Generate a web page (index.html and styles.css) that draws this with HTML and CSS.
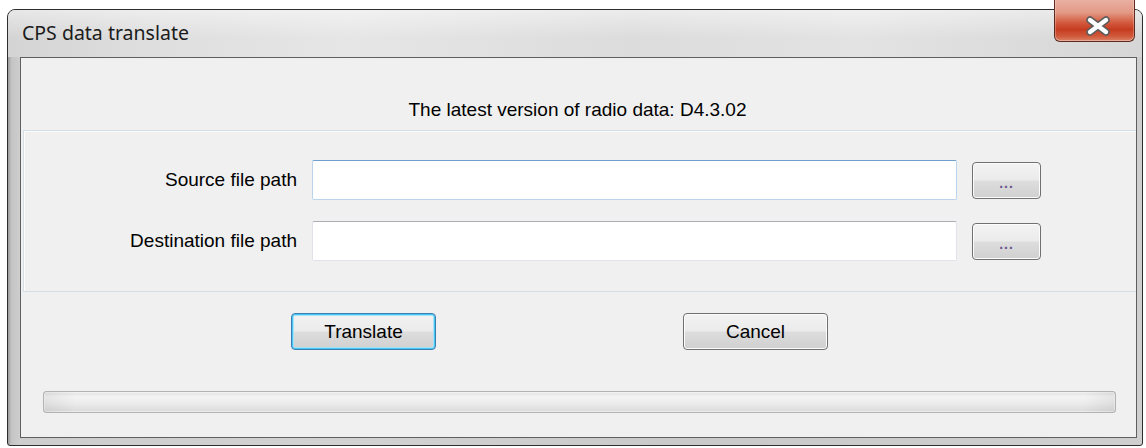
FILE: index.html
```html
<!DOCTYPE html>
<html lang="en">
<head>
<meta charset="utf-8">
<title>CPS data translate</title>
<link rel="stylesheet" href="styles.css">
</head>
<body>
<div class="window">
  <div class="titlebar">
    <span class="title">CPS data translate</span>
    <button class="close-btn" type="button" aria-label="Close">
      <svg width="26" height="20" viewBox="0 0 26 20">
        <path d="M5 4 L21 16 M21 4 L5 16" stroke="#5c5c5c" stroke-width="7.5" stroke-linecap="round" fill="none"/>
        <path d="M5 4 L21 16 M21 4 L5 16" stroke="#ffffff" stroke-width="4.4" stroke-linecap="round" fill="none"/>
      </svg>
    </button>
  </div>
  <div class="client">
    <div class="header">The latest version of radio data: D4.3.02</div>
    <div class="panel">
      <label class="field-label" for="src">Source file path</label>
      <input class="path-input hover" id="src" type="text">
      <button class="browse-btn" type="button">...</button>
      <label class="field-label" for="dst">Destination file path</label>
      <input class="path-input" id="dst" type="text">
      <button class="browse-btn" type="button">...</button>
    </div>
    <div class="actions">
      <button class="btn default" type="button">Translate</button>
      <button class="btn" type="button">Cancel</button>
    </div>
    <div class="progress"><div class="progress-shine"></div></div>
  </div>
</div>
</body>
</html>
```

FILE: styles.css
```css
* {
  box-sizing: border-box;
}

html, body {
  margin: 0;
  padding: 0;
  background: #ffffff;
}

body {
  width: 1146px;
  height: 448px;
  overflow: hidden;
  font-family: "Liberation Sans", Arial, sans-serif;
  font-size: 19px;
  color: #000;
}

/* Outer window frame */
.window {
  position: relative;
  margin: 9px 0 0 7px;
  width: 1136px;
  height: 437px;
  border: 1px solid #2e2e2e;
  border-radius: 8px 8px 3px 3px;
  padding: 0 5px 7px 12px;
  background: linear-gradient(to right, #9c9c9c 0%, #c4c4c4 0.3%, #cdcdcd 1%, #d2d2d2 30%, #c9c9c9 60%, #cfcfcf 100%);
  display: flex;
  flex-direction: column;
}

.titlebar {
  position: relative;
  height: 47px;
  margin: 0 -5px 0 -12px;
  padding: 11px 0 0 14px;
  border-radius: 7px 7px 0 0;
  background:
    linear-gradient(to bottom, rgba(255,255,255,0.45) 0%, rgba(255,255,255,0) 60%),
    linear-gradient(to right, #d4d4d4 0%, #dedede 12%, #e6e6e6 30%, #dcdcdc 55%, #e3e3e3 75%, #d6d6d6 100%);
}

.title {
  font-family: "Noto Sans", "Open Sans", sans-serif;
  font-size: 19.5px;
  line-height: 24px;
  color: #1b1b1b;
}

.close-btn {
  position: absolute;
  top: -10px;
  right: 7px;
  width: 81px;
  height: 42px;
  padding: 10px 0 0 6px;
  border: 1px solid #5e2a1e;
  border-top: none;
  border-radius: 0 0 6px 6px;
  background: linear-gradient(to bottom, #e9b0a2 0%, #e39a86 30%, #d35a3e 55%, #c63c20 72%, #d0583a 88%, #dc8266 100%);
  box-shadow: inset 0 -1px 0 rgba(255,255,255,0.35), inset 1px 0 0 rgba(255,255,255,0.25), inset -1px 0 0 rgba(255,255,255,0.25);
  display: flex;
  align-items: center;
  justify-content: center;
}

.close-btn svg {
  display: block;
}

/* Client area */
.client {
  flex: 1;
  border: 1px solid #5f5f5f;
  background: #f0f0f0;
  display: flex;
  flex-direction: column;
}

.header {
  height: 72px;
  padding-top: 41px;
  line-height: 22px;
  text-align: center;
  padding-right: 2px;
}

.panel {
  margin-left: 2px;
  border: 1px solid #d6dee5;
  border-right: none;
  box-shadow: inset 1px 1px 0 #fafcfd;
  padding: 29px 0 30px 0;
  display: grid;
  grid-template-columns: 288px 645px 84px;
  grid-auto-rows: 40px;
  row-gap: 21px;
  align-items: center;
}

.field-label {
  text-align: right;
  padding-right: 15px;
  line-height: 22px;
}

.path-input {
  height: 40px;
  width: 645px;
  margin: 0;
  border: 1px solid #e2e3ea;
  border-top-color: #abadb3;
  border-radius: 2px;
  background: #fff;
  outline: none;
  font: inherit;
}

.path-input.hover {
  border-color: #b9d4ec;
  border-top-color: #6f9fcf;
}

.browse-btn {
  justify-self: end;
  width: 69px;
  height: 37px;
  margin: 0;
  padding: 6px 0 0 0;
  border: 1px solid #707070;
  border-radius: 4px;
  background: linear-gradient(to bottom, #f3f3f3 0%, #ebebeb 48%, #dddddd 52%, #d0d0d0 100%);
  box-shadow: inset 0 0 0 1px #fcfcfc;
  font-family: "Liberation Sans", Arial, sans-serif;
  font-size: 14px;
  font-weight: bold;
  color: #6a5590;
  letter-spacing: 1px;
}

.actions {
  display: flex;
  gap: 247px;
  padding: 21px 0 0 270px;
  height: 99px;
}

.btn {
  width: 145px;
  height: 37px;
  margin: 0;
  padding: 0;
  border: 1px solid #707070;
  border-radius: 4px;
  background: linear-gradient(to bottom, #f3f3f3 0%, #ebebeb 48%, #dddddd 52%, #cfcfcf 100%);
  box-shadow: inset 0 0 0 1px #fcfcfc;
  font-family: "Liberation Sans", Arial, sans-serif;
  font-size: 19px;
  color: #000;
}

.btn.default {
  border-color: #3c7fb1;
  box-shadow: inset 0 0 0 1px #48c6f3, inset 0 0 0 2px #a6e3f8;
}

/* Empty progress bar */
.progress {
  position: relative;
  margin: 0 20px 0 22px;
  height: 22px;
  border: 1px solid #b2b2b2;
  border-radius: 3px;
  background: linear-gradient(to bottom, #e3e3e3 0%, #f3f3f3 25%, #ececec 55%, #dadada 100%);
  box-shadow: inset 0 0 0 1px rgba(255,255,255,0.5);
}

.progress-shine {
  height: 100%;
  background: linear-gradient(to right, rgba(0,0,0,0.06) 0%, rgba(0,0,0,0) 3%, rgba(0,0,0,0) 97%, rgba(0,0,0,0.06) 100%);
}
```
